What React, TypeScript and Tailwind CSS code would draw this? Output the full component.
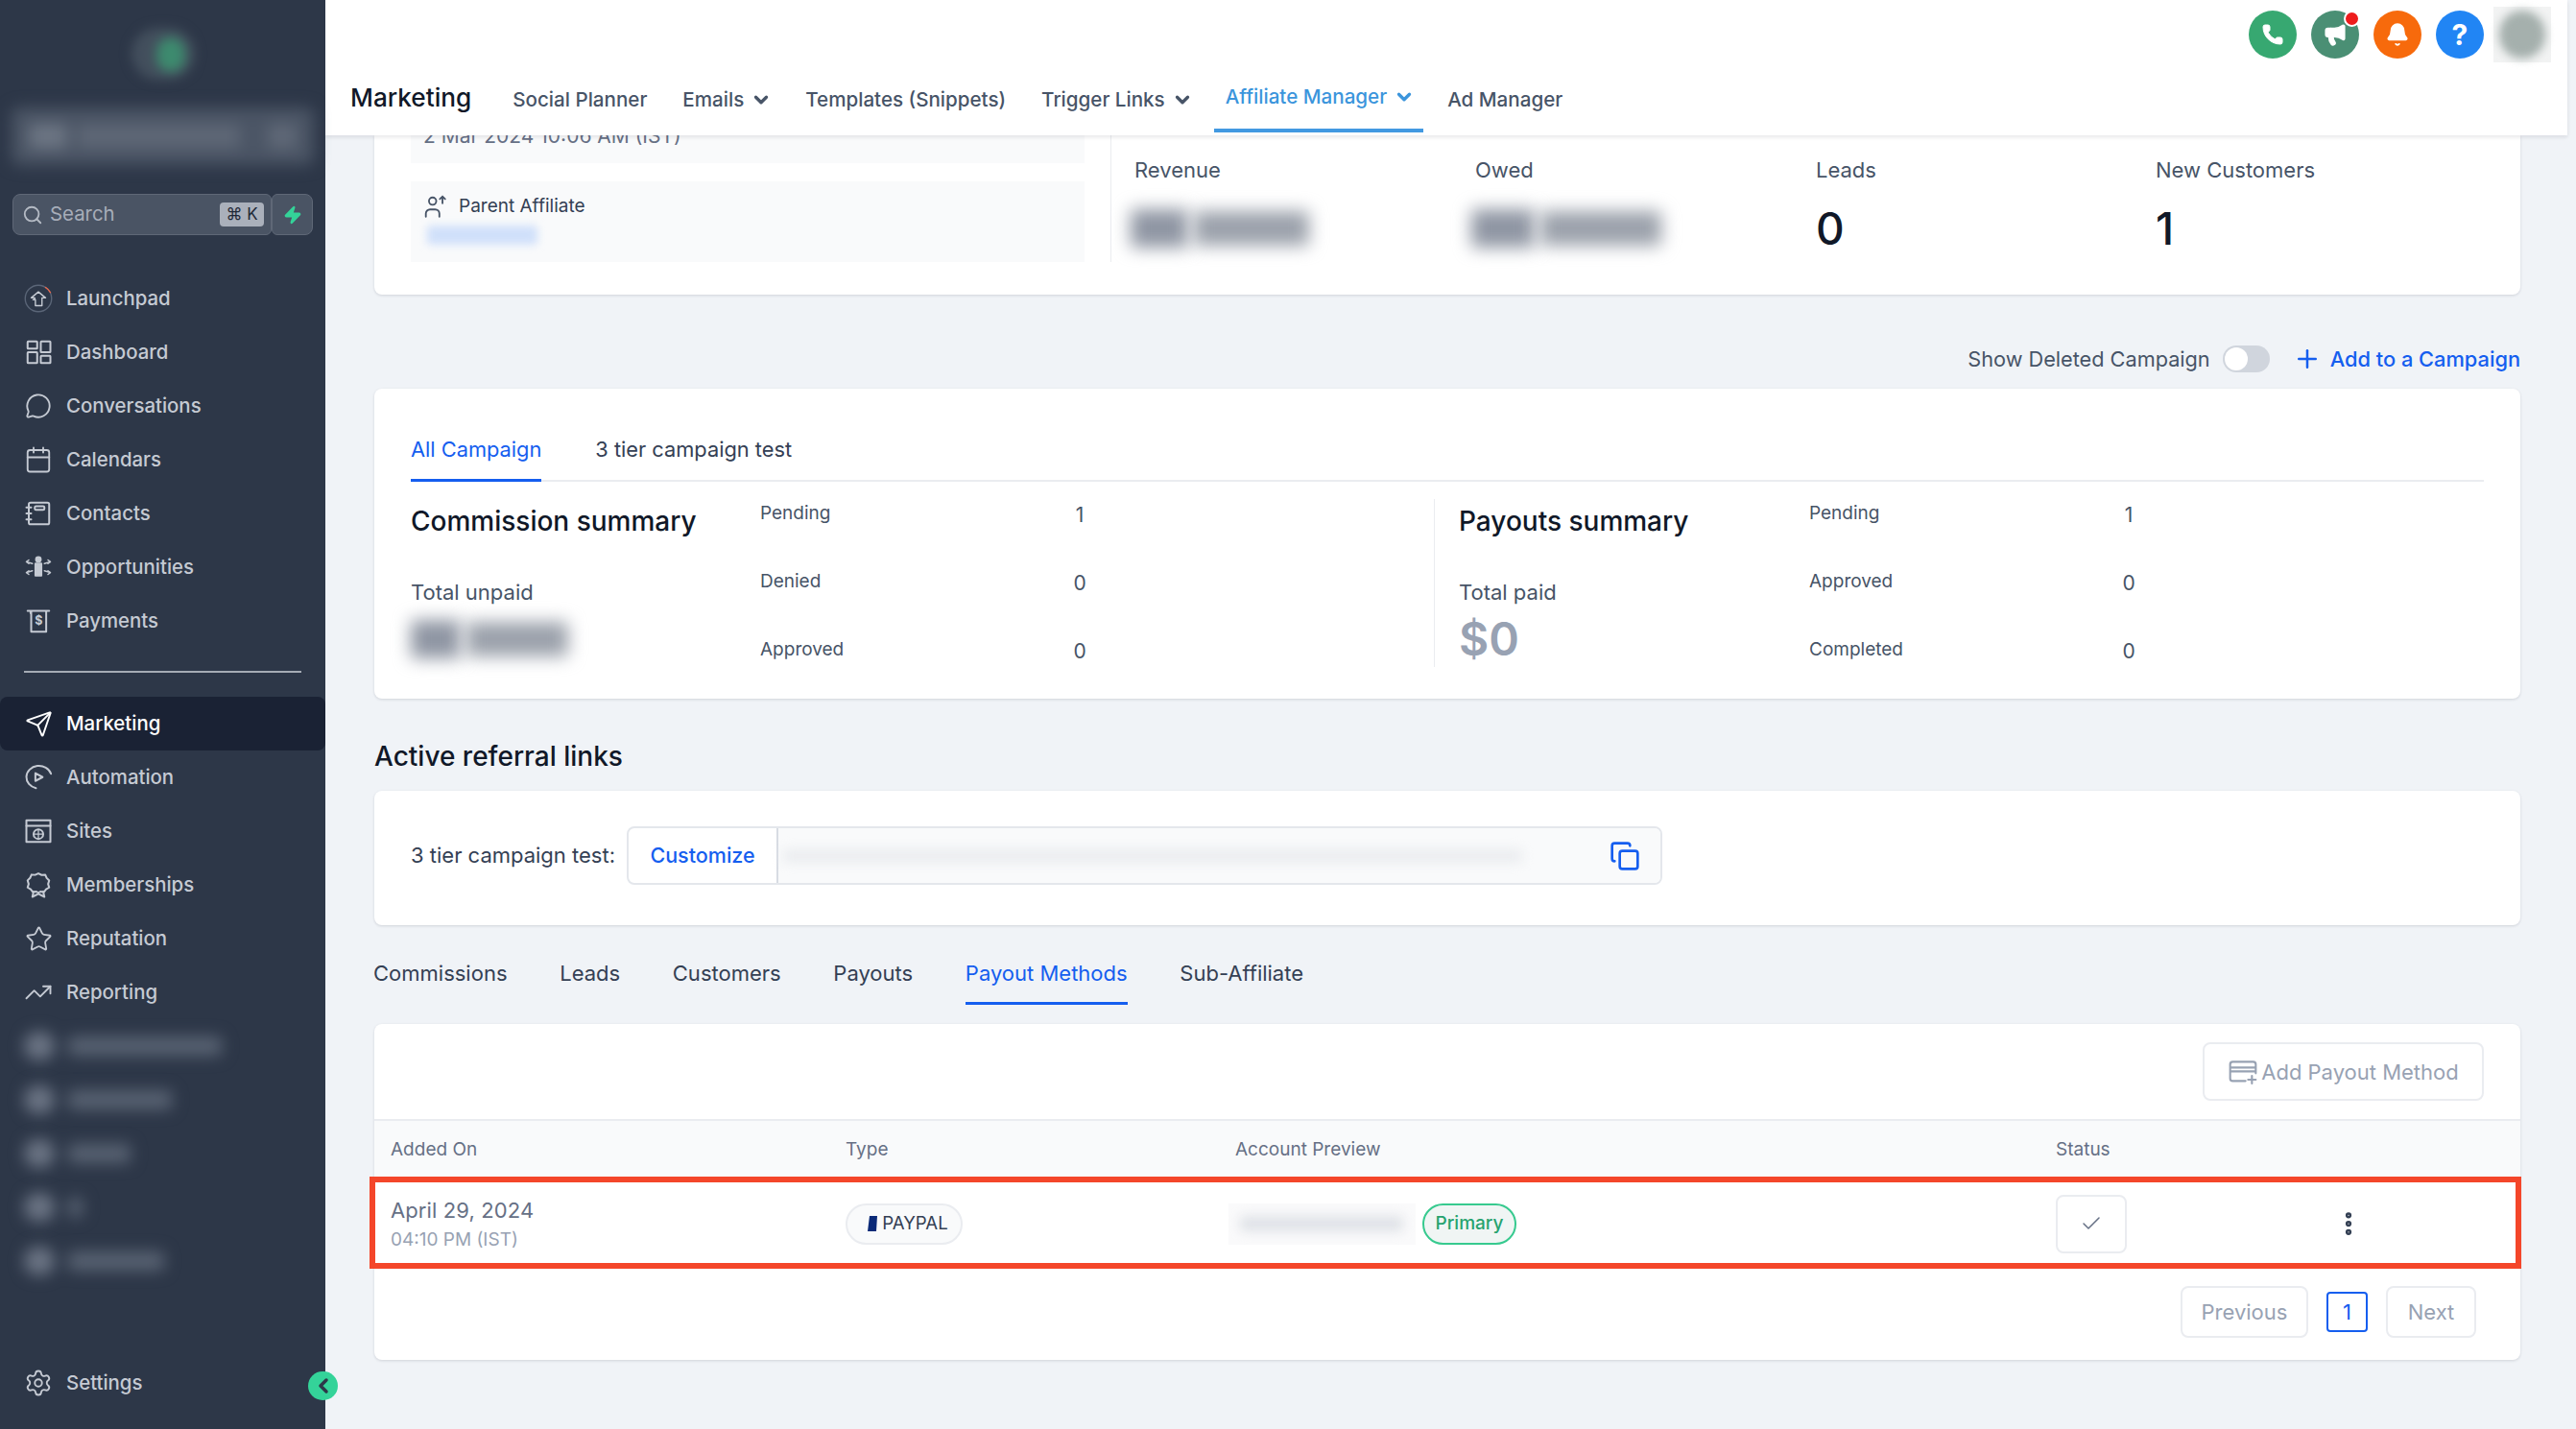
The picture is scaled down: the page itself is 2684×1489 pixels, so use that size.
import React from "react";
import { Search, Zap, MessageCircle, Calendar, Send, Star, TrendingUp, Settings, Phone, Megaphone, Bell, ChevronDown, ChevronLeft, Plus, Copy, Check, EllipsisVertical } from "lucide-react";

const sv = { width: 30, height: 30, viewBox: "0 0 24 24", fill: "none", stroke: "currentColor", strokeWidth: 1.6, strokeLinecap: "round" as const, strokeLinejoin: "round" as const };

const Launch = () => (
  <svg {...sv} strokeWidth={1.1}>
    <circle cx="12" cy="12" r="11" stroke="#5a6577" />
    <path d="M18 2.800A11 11 0 0 1 22 7" stroke="#f0674a" />
    <path d="M12 6.500 6 11.500h3v1.500H7.500M12 6.500l6 5h-3V18H9.500v-5" stroke="#c7ccd5" />
  </svg>
);
const Dash = () => (
  <svg {...sv}>
    <rect x="3" y="3" width="8" height="6" rx="0.5" /><rect x="14" y="3" width="8" height="9" rx="0.5" />
    <rect x="3" y="12" width="8" height="9" rx="0.5" /><rect x="14" y="15" width="8" height="6" rx="0.5" />
  </svg>
);
const Contacts = () => (
  <svg {...sv}>
    <rect x="4" y="3" width="17" height="18" rx="1.500" /><rect x="9" y="6" width="8" height="3" rx="1" />
    <path d="M2 7h4M2 12h4M2 17h4" />
  </svg>
);
const Opp = () => (
  <svg {...sv} strokeWidth={1.5}>
    <circle cx="12" cy="5.500" r="2" fill="currentColor" />
    <path d="M9.500 9h5v10h-5z" fill="currentColor" />
    <path d="M7 9 2 7.500M2 7.500l2-1.500M2 7.500 4 9M7 15l-5 1.500M2 16.500 4 15M2 16.500 4 18M17 9l5-1.500M22 7.500 20 6M22 7.500 20 9M17 15l5 1.500M22 16.500 20 15M22 16.500 20 18" strokeWidth={1.2} />
  </svg>
);
const Pay = () => (
  <svg {...sv}>
    <path d="M3 3.500h18M5.500 3.500v2M18.500 3.500V21H6V3.500" />
    <text x="12.200" y="15.500" textAnchor="middle" fontSize="10" fontWeight="700" fill="currentColor" stroke="none" fontFamily="Inter">$</text>
  </svg>
);
const Auto = () => (
  <svg {...sv}>
    <path d="M22.500 9A10.500 9.500 0 0 0 2 11.500 10.500 9.500 0 0 0 10 21" />
    <path d="M9.500 8.500v6.500l6-3.200z" />
  </svg>
);
const Sites = () => (
  <svg {...sv}>
    <rect x="2" y="3" width="20" height="18" /><path d="M2 7.500h20" />
    <circle cx="12" cy="14.500" r="4" /><path d="M8 14.500h8M12 10.500v8" strokeWidth={1} />
  </svg>
);
const Member = () => (
  <svg {...sv}>
    <path d="M12 2.500l2.700 1.300 3-.2 1.200 2.700 2.100 2.100-.9 2.900.9 2.900-2.600 1.500-1.700 2.300-3-.4-1.700 1-1.700-1-3 .4-1.700-2.300-2.600-1.500.9-2.900L3 8.300l2.100-2.100 1.200-2.700 3 .2z" />
    <path d="M8 17.500 7 22l5-2.500 5 2.500-1-4.500" />
  </svg>
);
const ParentIcon = () => (
  <svg width="26" height="26" viewBox="0 0 24 24" fill="none" stroke="#475467" strokeWidth="1.700" strokeLinecap="round">
    <circle cx="9" cy="7" r="3.500" /><path d="M2.500 22v-3a4 4 0 0 1 4-4h5a4 4 0 0 1 4 4v3M18.500 9V2.500M16 5l2.500-2.500L21 5" />
  </svg>
);
const CardPlus = () => (
  <svg width="32" height="32" viewBox="0 0 24 24" fill="none" stroke="#98a2b3" strokeWidth="1.600" strokeLinecap="round">
    <path d="M14 19H4a2 2 0 0 1-2-2V6a2 2 0 0 1 2-2h16a2 2 0 0 1 2 2v7M2 8.500h20M2 11.500h20M19 15v6M16 18h6" />
  </svg>
);

const Nav = ({ icon, label, active }: { icon: React.ReactNode; label: string; active?: boolean }) => (
  <div className={`flex h-[56px] items-center gap-[14px] pl-[25px] rounded-lg text-[20.400px] font-medium ${active ? "bg-[#1a2234] text-white" : "text-[#c5cad3]"}`}>
    <span className="flex w-[30px] justify-center">{icon}</span>
    <span>{label}</span>
  </div>
);

const BlurNav = ({ w }: { w: number }) => (
  <div className="flex h-[56px] items-center gap-[14px] pl-[25px] blur-[8px]">
    <span className="h-[30px] w-[32px] rounded-full bg-[#6b7484]" />
    <span className="h-[20px] rounded bg-[#586272]" style={{ width: w }} />
  </div>
);

const BlurMoney = ({ first, second }: { first: string; second: string }) => (
  <div className="-ml-[4px] flex h-[52px] items-center gap-[6px]">
    <div className={`h-[40px] rounded bg-[#8f96a3] blur-[9px] ${first}`} />
    <div className={`h-[36px] rounded bg-[#9ba1ab] blur-[9px] ${second}`} />
  </div>
);

const Metric = ({ label, children }: { label: string; children: React.ReactNode }) => (
  <div>
    <div className="h-[30px] text-[22px] leading-[30px] text-[#475467]">{label}</div>
    <div className="mt-[18px] flex h-[56px] items-center text-[46px] font-medium text-[#101828]">{children}</div>
  </div>
);

const SumRow = ({ label, value }: { label: string; value: string }) => (
  <div className="flex h-[30px] items-center">
    <span className="w-[323px] text-[19px] text-[#475467]">{label}</span>
    <span className="w-[20px] pt-[3px] text-center text-[21px] text-[#475467]">{value}</span>
  </div>
);

const Summary = ({ title, total, value, rows, col }: { title: string; total: string; value: React.ReactNode; rows: [string, string][]; col: string }) => (
  <div className="flex">
    <div className={col}>
      <div className="flex h-[46px] items-center text-[28px] font-medium text-[#101828]">{title}</div>
      <div className="mt-[36px] h-[30px] text-[22px] leading-[30px] text-[#475467]">{total}</div>
      <div className="mt-[6px] flex h-[56px] items-center">{value}</div>
    </div>
    <div className="flex flex-col gap-[41px]">
      {rows.map(([l, v]) => <SumRow key={l} label={l} value={v} />)}
    </div>
  </div>
);

const Circle = ({ bg, children }: { bg: string; children: React.ReactNode }) => (
  <div className={`relative flex h-[50px] w-[50px] items-center justify-center rounded-full text-white ${bg}`}>{children}</div>
);

const Page = ({ label, cls }: { label: string; cls: string }) => (
  <div className={`flex items-center justify-center rounded-lg border-2 border-[#eaecf0] text-[22px] text-[#98a2b3] h-[54px] ${cls}`}>{label}</div>
);

const Chevron = ({ cls }: { cls: string }) => <ChevronDown size={22} strokeWidth={3.600} className={cls} />;

export default function App() {
  return (
    <div className="flex h-[1489px] w-[2684px] overflow-hidden bg-[#f0f3f7] font-['Inter',sans-serif]">
      <aside className="relative z-20 flex h-full w-[339px] shrink-0 flex-col bg-[#2d3748]">
        <div className="flex h-[112px] items-center justify-center">
          <div className="relative h-[54px] w-[66px] rounded-full bg-[#434f5d] blur-[6px]">
            <div className="absolute left-[26px] top-[10px] h-[36px] w-[30px] rounded-full bg-[#3d8a6e]" />
          </div>
        </div>
        <div className="mx-[12px] flex h-[60px] items-center gap-[10px] rounded-lg bg-[#4b5565] px-[18px] blur-[8px]">
          <div className="h-[26px] w-[40px] rounded bg-[#6c7583]" />
          <div className="h-[24px] w-[170px] rounded bg-[#5e6776]" />
          <div className="ml-auto h-[26px] w-[30px] rounded bg-[#5f6877]" />
        </div>
        <div className="mx-[13px] mt-[30px] flex h-[43px] items-stretch">
          <div className="flex w-[271px] items-center rounded-l-lg rounded-r-md border border-[#5f6877] bg-[#4a5464] pl-[9px] pr-[7px]">
            <Search size={22} className="text-[#b4bac4]" />
            <span className="ml-[7px] flex-1 text-[20.400px] text-[#a7adb9]">Search</span>
            <span className="flex h-[25px] w-[46px] items-center justify-center rounded bg-[#aab0bb] text-[17px] text-[#1f2937]">⌘ K</span>
          </div>
          <div className="flex w-[43px] items-center justify-center rounded-r-lg rounded-l-md border border-[#5f6877] bg-[#4a5464]">
            <Zap size={20} className="fill-[#34d399] text-[#34d399]" />
          </div>
        </div>
        <nav className="mt-[38px]">
          <Nav icon={<Launch />} label="Launchpad" />
          <Nav icon={<Dash />} label="Dashboard" />
          <Nav icon={<MessageCircle size={28} strokeWidth={1.600} />} label="Conversations" />
          <Nav icon={<Calendar size={30} strokeWidth={1.500} />} label="Calendars" />
          <Nav icon={<Contacts />} label="Contacts" />
          <Nav icon={<Opp />} label="Opportunities" />
          <Nav icon={<Pay />} label="Payments" />
        </nav>
        <div className="mx-[25px] mt-[24px] h-[2px] bg-[#a5abb5]" />
        <div className="mt-[25px]">
          <Nav active icon={<Send size={29} strokeWidth={1.600} />} label="Marketing" />
          <Nav icon={<Auto />} label="Automation" />
          <Nav icon={<Sites />} label="Sites" />
          <Nav icon={<Member />} label="Memberships" />
          <Nav icon={<Star size={29} strokeWidth={1.500} />} label="Reputation" />
          <Nav icon={<TrendingUp size={30} strokeWidth={1.500} />} label="Reporting" />
          <BlurNav w={160} />
          <BlurNav w={108} />
          <BlurNav w={65} />
          <BlurNav w={15} />
          <BlurNav w={100} />
        </div>
        <div className="mb-[20px] mt-auto">
          <Nav icon={<Settings size={30} strokeWidth={1.500} />} label="Settings" />
        </div>
        <div className="absolute left-[321px] top-[1429px] flex h-[30px] w-[31px] items-center justify-center rounded-full bg-[#34d399] text-[#2d3748]">
          <ChevronLeft size={24} strokeWidth={3.500} />
        </div>
      </aside>

      <div className="flex min-w-0 flex-1 flex-col">
        <header className="relative z-10 mr-[9px] h-[141px] shrink-0 bg-white shadow-[0_2px_4px_rgba(16,24,40,0.10)]">
          <div className="flex h-[72px] items-center justify-end gap-[15px] pr-[17px]">
            <Circle bg="bg-[#37a871]"><Phone size={24} className="fill-white" strokeWidth={1} /></Circle>
            <Circle bg="bg-[#4a8f74]">
              <Megaphone size={26} className="fill-white" strokeWidth={1.500} />
              <span className="absolute right-[-1px] top-[0px] h-[17px] w-[17px] rounded-full border-2 border-white bg-[#ee1c1c]" />
            </Circle>
            <Circle bg="bg-[#f76a0c]"><Bell size={26} className="fill-white" strokeWidth={1.500} /></Circle>
            <Circle bg="bg-[#2185f4]"><span className="text-[30px] font-bold leading-none">?</span></Circle>
            <div className="-ml-[5px] h-[58px] w-[60px] bg-[#f2f3f3]">
              <div className="ml-[6px] mt-[4px] h-[50px] w-[48px] rounded-full bg-[#a5b0ad] blur-[5px]" />
            </div>
          </div>
          <div className="flex h-[66px] items-stretch pl-[26px] text-[20.600px] font-medium text-[#475467]">
            <div className="mr-[43px] flex items-center pb-[6px] text-[26.200px] text-[#101828]">Marketing</div>
            <div className="flex items-center gap-[37px]">
              <span className="flex h-full items-center pb-[2px]">Social Planner</span>
              <span className="flex h-full items-center gap-[7px] pb-[2px]">Emails <Chevron cls="-mr-[2px]" /></span>
              <span className="flex h-full items-center pb-[2px]">Templates (Snippets)</span>
              <span className="flex h-full items-center gap-[7px] pb-[2px]">Trigger Links <Chevron cls="-mr-[3px]" /></span>
              <span className="-mx-[12px] flex h-full items-center gap-[7px] border-b-4 border-[#4299e1] px-[12px] pb-[4px] text-[#3b95dc]">Affiliate Manager <Chevron cls="-mr-[3px]" /></span>
              <span className="flex h-full items-center pb-[2px]">Ad Manager</span>
            </div>
          </div>
        </header>

        <main className="min-h-0 flex-1 pl-[51px] pr-[58px]">
          {/* top card */}
          <section className="flex h-[166px] rounded-b-lg bg-white pl-[38px] shadow-[0_1px_3px_rgba(16,24,40,0.14)]">
            <div className="w-[702px]">
              <div className="h-[29px] overflow-hidden bg-[#f9fafb] pl-[13px]">
                <div className="-mt-[14px] text-[21px] leading-[30px] text-[#667085]">2 Mar 2024 10:06 AM (IST)</div>
              </div>
              <div className="mt-[19px] h-[84px] bg-[#f9fafb] pl-[13px] pt-[12px]">
                <div className="flex h-[28px] items-center gap-[11px] text-[19px] text-[#344054]">
                  <ParentIcon /> <span>Parent Affiliate</span>
                </div>
                <div className="ml-[4px] mt-[6px] h-[20px] w-[115px] rounded bg-[#d0e0fa] blur-[4px]" />
              </div>
            </div>
            <div className="ml-[27px] h-[132px] w-px bg-[#eaecf0]" />
            <div className="grid flex-1 grid-cols-[355px_355px_354px_1fr] pl-[24px] pt-[21px]">
              <Metric label="Revenue"><BlurMoney first="w-[60px]" second="w-[120px]" /></Metric>
              <Metric label="Owed"><BlurMoney first="w-[66px]" second="w-[126px]" /></Metric>
              <Metric label="Leads">0</Metric>
              <Metric label="New Customers">1</Metric>
            </div>
          </section>

          {/* toggle row */}
          <div className="mb-[14px] mt-[50px] flex h-[34px] items-center justify-end">
            <span className="text-[21.700px] text-[#475467]">Show Deleted Campaign</span>
            <span className="ml-[13px] flex h-[28px] w-[49px] items-center rounded-full bg-[#d0d5dd] pl-[2px]">
              <span className="h-[24px] w-[24px] rounded-full bg-white" />
            </span>
            <Plus size={30} strokeWidth={2} className="ml-[24px] text-[#155eef]" />
            <span className="ml-[9px] text-[21.800px] font-medium text-[#155eef]">Add to a Campaign</span>
          </div>

          {/* summary card */}
          <section className="h-[323px] rounded-lg bg-white px-[38px] pt-[48px] shadow-[0_1px_3px_rgba(16,24,40,0.14)]">
            <div className="flex gap-[56px] border-b-2 border-[#eaecf0] text-[21.800px] leading-[30px]">
              <div className="-mb-[2px] border-b-[3px] border-[#155eef] pb-[16px] text-[#155eef]">All Campaign</div>
              <div className="text-[#344054]">3 tier campaign test</div>
            </div>
            <div className="mt-[18px] flex h-[175px]">
              <div className="w-[1066px]">
                <Summary
                  col="w-[364px]"
                  title="Commission summary"
                  total="Total unpaid"
                  value={<div className="flex items-center gap-[6px]"><div className="h-[40px] w-[52px] rounded bg-[#8f96a3] blur-[9px]" /><div className="h-[36px] w-[106px] rounded bg-[#9ba1ab] blur-[9px]" /></div>}
                  rows={[["Pending", "1"], ["Denied", "0"], ["Approved", "0"]]}
                />
              </div>
              <div className="flex w-px bg-[#eaecf0]" />
              <div className="pl-[25px]">
                <Summary
                  col="w-[365px]"
                  title="Payouts summary"
                  total="Total paid"
                  value={<span className="text-[48px] font-semibold text-[#98a2b3]">$0</span>}
                  rows={[["Pending", "1"], ["Approved", "0"], ["Completed", "0"]]}
                />
              </div>
            </div>
          </section>

          <h2 className="mb-[16px] mt-[40px] flex h-[40px] items-center text-[28px] font-medium text-[#101828]">Active referral links</h2>

          {/* referral card */}
          <section className="flex h-[140px] items-center rounded-lg bg-white pb-[5px] pl-[38px] shadow-[0_1px_3px_rgba(16,24,40,0.14)]">
            <span className="w-[225px] text-[22px] text-[#344054]">3 tier campaign test:</span>
            <div className="flex h-[61px] w-[1079px] items-stretch overflow-hidden rounded-lg border-2 border-[#e4e7ec]">
              <div className="flex w-[156px] items-center justify-center border-r-2 border-[#d8dce3] text-[21.500px] font-medium text-[#155eef]">Customize</div>
              <div className="flex flex-1 items-center bg-[#f9fafb] pl-[5px] pr-[21px]">
                <div className="h-[14px] w-[770px] rounded bg-[#eaecef] blur-[6px]" />
                <Copy size={32} strokeWidth={2} className="ml-auto text-[#155eef]" />
              </div>
            </div>
          </section>

          {/* lower tabs */}
          <div className="-ml-[1px] mt-[30px] flex h-[53px] gap-[54.700px] text-[22px] leading-[40px] text-[#344054]">
            <span>Commissions</span>
            <span>Leads</span>
            <span>Customers</span>
            <span>Payouts</span>
            <span className="h-[53px] border-b-[3px] border-[#155eef] text-[#155eef]">Payout Methods</span>
            <span>Sub-Affiliate</span>
          </div>

          {/* table card */}
          <section className="mt-[20px] h-[350px] rounded-lg bg-white shadow-[0_1px_3px_rgba(16,24,40,0.14)]">
            <div className="flex h-[101px] items-center justify-end border-b-2 border-[#eaecf0] pr-[38px]">
              <div className="flex h-[61px] w-[293px] items-center justify-center gap-[3px] rounded-lg border-2 border-[#eaecf0] pt-[1px] text-[22px] text-[#98a2b3]">
                <CardPlus /> <span>Add Payout Method</span>
              </div>
            </div>
            <div className="grid h-[58px] grid-cols-[474px_406px_855px_1fr] items-center bg-[#f9fafb] pl-[17px] pt-[2px] text-[19px] text-[#667085]">
              <span>Added On</span><span>Type</span><span>Account Preview</span><span>Status</span>
            </div>
            <div className="relative grid h-[96px] grid-cols-[474px_406px_855px_305px_1fr] items-center pl-[17px] pt-[2px]">
              <div>
                <div className="pt-[1px] text-[22px] leading-[30px] tracking-[0.005em] text-[#667085]">April 29, 2024</div>
                <div className="pt-[2px] text-[19px] leading-[28px] text-[#98a2b3]">04:10 PM (IST)</div>
              </div>
              <div>
                <div className="flex h-[43px] w-[122px] items-center justify-center gap-[5px] rounded-full border-2 border-[#eaecf0] bg-[#f9fafb] pl-[8px] text-[18.600px] text-[#344054]">
                  <svg width="10" height="16" viewBox="0 0 10 16"><polygon points="2,0 10,0 9,16 0,16" fill="#0b2a78" /></svg>
                  <span>PAYPAL</span>
                </div>
              </div>
              <div className="-ml-[7px] flex items-center gap-[7px]">
                <div className="h-[43px] w-[195px] bg-[#fafafb]">
                  <div className="ml-[12px] mt-[13px] h-[16px] w-[170px] rounded bg-[#dfe2e7] blur-[6px]" />
                </div>
                <div className="flex h-[43px] w-[98px] items-center justify-center rounded-full border-2 border-[#37ca8f] bg-[#f0f5f4] text-[19px] font-medium text-[#27a36f]">Primary</div>
              </div>
              <div>
                <div className="flex h-[61px] w-[74px] items-center justify-center rounded-lg border-2 border-[#eaecf0] text-[#667085]">
                  <Check size={24} strokeWidth={1.500} />
                </div>
              </div>
              <EllipsisVertical size={30} strokeWidth={3} className="-ml-[15px] text-[#344054]" />
              <div className="pointer-events-none absolute -left-[5px] -right-[1px] top-0 h-[96px] border-[6px] border-[#f4462a]" />
            </div>
            <div className="flex items-start justify-end pr-[46px] pt-[18px]">
              <Page label="Previous" cls="w-[133px]" />
              <div className="ml-[19px] mt-[6px] flex h-[42px] w-[43px] items-center justify-center rounded border-2 border-[#155eef] text-[22px] text-[#155eef]">1</div>
              <Page label="Next" cls="ml-[19px] w-[94px]" />
            </div>
          </section>
        </main>
      </div>
    </div>
  );
}
